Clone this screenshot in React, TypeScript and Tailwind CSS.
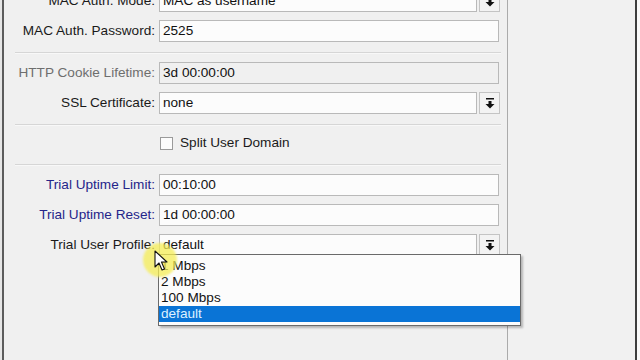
import React from "react";

const font = { fontFamily: '"Liberation Sans", Arial, sans-serif' };

const DropIcon = () => (
  <svg width="10" height="11" viewBox="0 0 10 11">
    <rect x="1" y="0" width="8" height="1.5" fill="#111" />
    <rect x="3.5" y="3" width="3" height="3" fill="#111" />
    <path d="M0.5 6 L9.5 6 L5 10.5 Z" fill="#111" />
  </svg>
);

const Field = ({ value, disabled }: { value: string; disabled?: boolean }) => (
  <div
    className={`w-[340px] h-[22px] border border-[#b9b9b9] flex items-center pl-[3px] text-[13.6px] text-[#111] ${
      disabled ? "bg-[#f0f0f0]" : "bg-[#fcfcfc]"
    }`}
  >
    {value}
  </div>
);

const Select = ({ value }: { value: string }) => (
  <div className="flex gap-[2px]">
    <div className="w-[318px] h-[22px] border border-[#b9b9b9] bg-[#fcfcfc] flex items-center pl-[3px] text-[13.6px] text-[#111]">
      {value}
    </div>
    <div className="w-[21px] h-[22px] border border-[#c4c4c4] bg-[#f3f3f3] flex items-center justify-center">
      <DropIcon />
    </div>
  </div>
);

const Row = ({
  label,
  tone = "normal",
  children,
}: {
  label: string;
  tone?: "normal" | "disabled" | "blue";
  children: React.ReactNode;
}) => {
  const color =
    tone === "disabled" ? "text-[#6e6e6e]" : tone === "blue" ? "text-[#25258a]" : "text-[#1a1a1a]";
  return (
    <div className="flex items-center h-[22px]">
      <div className={`w-[151px] text-right text-[13.6px] whitespace-nowrap ${color}`}>{label}</div>
      <div className="ml-[4px]">{children}</div>
    </div>
  );
};

const Sep = () => <div className="ml-[11px] w-[486px] h-[2px] border-t border-[#d6d6d6] bg-[#f8f8f8]" />;

export default function App() {
  return (
    <div className="relative w-[640px] h-[360px] overflow-hidden bg-[#f0f0f0] flex" style={font}>
      <div className="w-[2px] bg-[#e6e6e6]" />
      <div className="w-[2px] bg-[#5c5c5c]" />
      <div className="w-[503px] flex flex-col mt-[-10px]">
        <Row label="MAC Auth. Mode:">
          <Select value="MAC as username" />
        </Row>
        <div className="h-[8px]" />
        <Row label="MAC Auth. Password:">
          <Field value="2525" />
        </Row>
        <div className="h-[10px]" />
        <Sep />
        <div className="h-[8px]" />
        <Row label="HTTP Cookie Lifetime:" tone="disabled">
          <Field value="3d 00:00:00" disabled />
        </Row>
        <div className="h-[8px]" />
        <Row label="SSL Certificate:">
          <Select value="none" />
        </Row>
        <div className="h-[10px]" />
        <Sep />
        <div className="h-[10px]" />
        <div className="flex items-center h-[15px] ml-[156px]">
          <div className="w-[13px] h-[13px] border border-[#9a9a9a] bg-[#fcfcfc]" />
          <span className="ml-[7px] text-[13.6px] text-[#1a1a1a]">Split User Domain</span>
        </div>
        <div className="h-[13px]" />
        <Sep />
        <div className="h-[8px]" />
        <Row label="Trial Uptime Limit:" tone="blue">
          <Field value="00:10:00" />
        </Row>
        <div className="h-[8px]" />
        <Row label="Trial Uptime Reset:" tone="blue">
          <Field value="1d 00:00:00" />
        </Row>
        <div className="h-[8px]" />
        <Row label="Trial User Profile:">
          <Select value="default" />
        </Row>
      </div>
      <div className="w-[1px] bg-[#ababab]" />
      <div className="w-[127px] bg-[#f1f1f1]" />
      <div className="w-[2px] bg-[#3e3e3e]" />
      <div className="flex-1 bg-[#fafafa]" />

      <div className="absolute left-[158px] top-[254px] w-[363px] h-[72px] bg-[#fcfcfc] border border-[#6a6a6a] shadow-[2px_2px_2px_rgba(0,0,0,0.25)] pt-[3px] text-[13.6px] text-[#111]">
        {["1 Mbps", "2 Mbps", "100 Mbps"].map((t) => (
          <div key={t} className="h-[16px] leading-[16px] pl-[2px]">
            {t}
          </div>
        ))}
        <div className="h-[16px] leading-[16px] pl-[2px] bg-[#0a74d6] text-[#dcf1ff]">default</div>
      </div>

      <div className="absolute left-[143px] top-[243px] w-[34px] h-[34px] rounded-full bg-[#f5ee55]/75 blur-[1px]" />
      <svg className="absolute left-[154px] top-[250px]" width="14" height="22" viewBox="0 0 14 22">
        <path d="M1 1 L1 17 L5 13 L8 20 L10.5 19 L7.5 12 L13 12 Z" fill="#fff" stroke="#111" strokeWidth="1.1" strokeLinejoin="round" />
      </svg>
    </div>
  );
}
